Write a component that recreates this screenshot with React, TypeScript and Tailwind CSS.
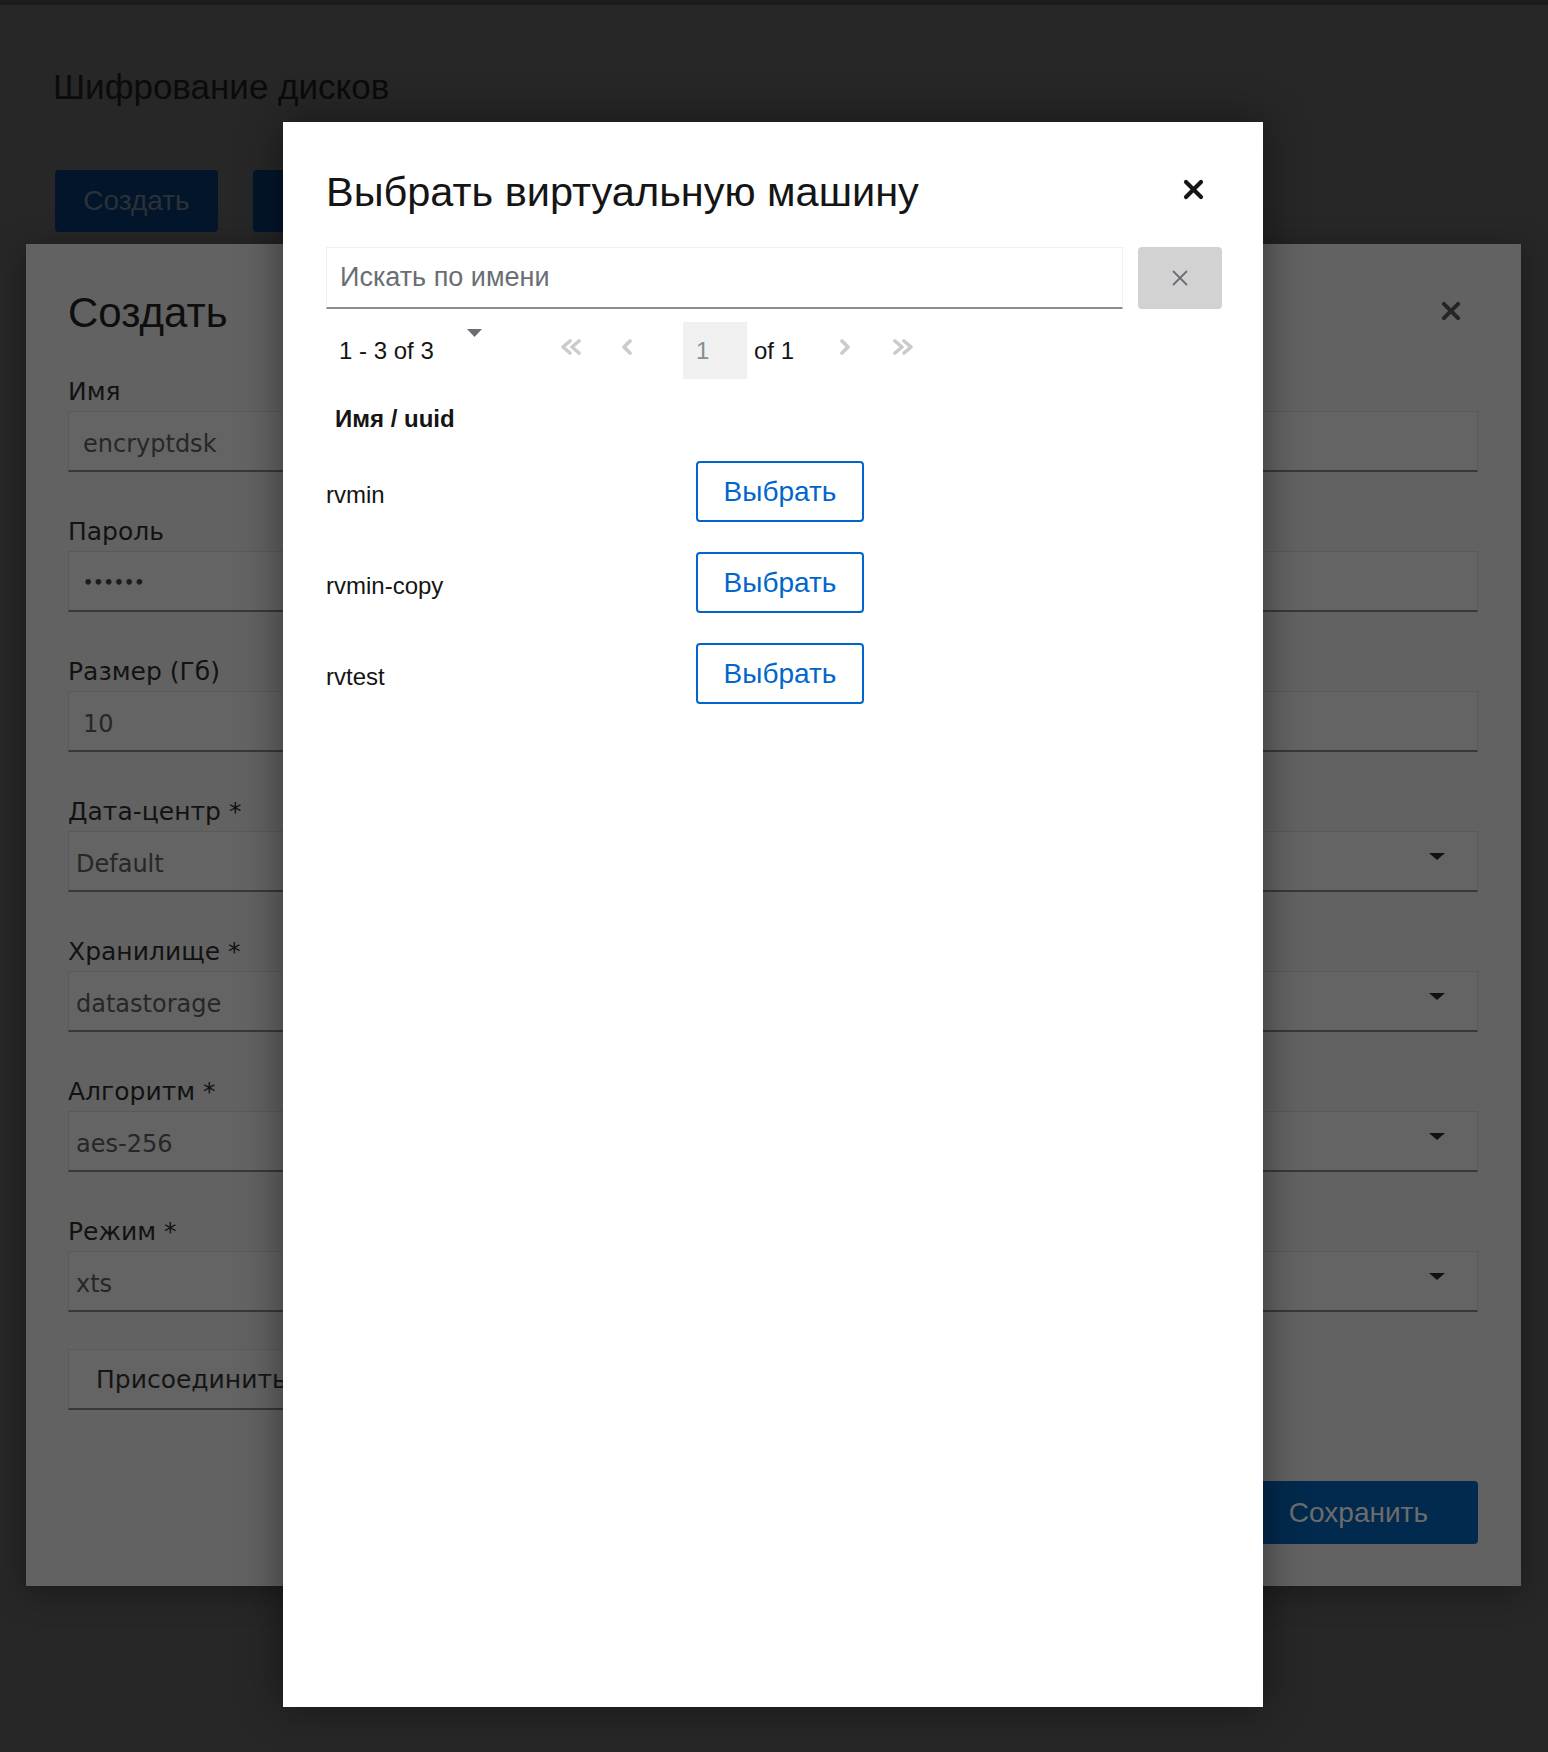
import React from 'react';

type Field = { label: string; value: string; kind: 'input' | 'select' | 'password' };

const FIELDS: Field[] = [
  { label: 'Имя', value: 'encryptdsk', kind: 'input' },
  { label: 'Пароль', value: '••••••', kind: 'password' },
  { label: 'Размер (Гб)', value: '10', kind: 'input' },
  { label: 'Дата-центр *', value: 'Default', kind: 'select' },
  { label: 'Хранилище *', value: 'datastorage', kind: 'select' },
  { label: 'Алгоритм *', value: 'aes-256', kind: 'select' },
  { label: 'Режим *', value: 'xts', kind: 'select' },
];

const VMS = ['rvmin', 'rvmin-copy', 'rvtest'];

function BoldX({ className }: { className?: string }) {
  return (
    <svg viewBox="0 0 21 21" className={className} fill="none">
      <path d="M3 3 L18 18 M18 3 L3 18" stroke="currentColor" strokeWidth="4.2" strokeLinecap="round" />
    </svg>
  );
}

function ThinX() {
  return (
    <svg viewBox="0 0 16 16" className="h-[16px] w-[16px] text-[#6a6e73]" fill="none">
      <path d="M1 1 L15 15 M15 1 L1 15" stroke="currentColor" strokeWidth="1.8" />
    </svg>
  );
}

function Chevron({ dir, double }: { dir: 'left' | 'right'; double?: boolean }) {
  const w = double ? 24 : 14;
  let d = '';
  if (dir === 'left') {
    d = double ? 'M11 2 L4 8 L11 14 M20 2 L13 8 L20 14' : 'M10 2 L4 8 L10 14';
  } else {
    d = double ? 'M4 2 L11 8 L4 14 M13 2 L20 8 L13 14' : 'M4 2 L10 8 L4 14';
  }
  return (
    <svg viewBox={`0 0 ${w} 16`} width={w} height={16} fill="none" className="mb-[8px] shrink-0 text-[#cbcbcb]">
      <path d={d} stroke="currentColor" strokeWidth="3.6" strokeLinecap="round" strokeLinejoin="round" />
    </svg>
  );
}

function PanelField({ field, first }: { field: Field; first: boolean }) {
  return (
    <div className={first ? '' : 'mt-[47px]'}>
      <div className="h-[25px] text-[25px] leading-none text-[#121212]">{field.label}</div>
      <div className="mt-[7px] flex h-[61px] items-center justify-between border border-b-2 border-[#5a5a5a] border-b-[#383838] bg-[#646464]">
        {field.kind === 'password' ? (
          <span className="pl-[14px] pt-[4px] text-[16px] font-bold leading-none text-[#1c1c1c]">{field.value}</span>
        ) : (
          <span
            className={`pt-[6px] text-[24px] leading-none text-[#272727] ${
              field.kind === 'select' ? 'pl-[7px]' : 'pl-[14px]'
            }`}
          >
            {field.value}
          </span>
        )}
        {field.kind === 'select' && (
          <svg viewBox="0 0 16 7" className="mr-[32px] mb-[10px] h-[7px] w-[16px]">
            <path d="M0 0 L16 0 L8 7 Z" fill="#111111" />
          </svg>
        )}
      </div>
    </div>
  );
}

export default function App() {
  return (
    <div className="relative min-h-[1752px] w-full overflow-hidden bg-[#272727] font-['Liberation_Sans',Arial,sans-serif]">
      <div className="h-[5px] bg-[#1c1c1c]" />

      {/* background page, dimmed */}
      <div className="pl-[53px]">
        <h1 className="mt-[64px] h-[34px] text-[35px] font-normal leading-none text-[#0b0b0b]">
          Шифрование дисков
        </h1>
        <div className="mt-[67px] flex gap-[35px] pl-[2px]">
          <div className="flex h-[62px] w-[163px] items-center justify-center rounded-[4px] bg-[#03152a] text-[28px] text-[#2b3138]">
            Создать
          </div>
          <div className="h-[62px] w-[163px] rounded-[4px] bg-[#03152a]" />
        </div>
      </div>

      <div className="ml-[26px] mt-[12px] h-[1342px] w-[1495px] bg-[#626262] pl-[42px] pr-[43px] pt-[48px] shadow-[0_6px_30px_rgba(0,0,0,0.35)]">
        <div className="flex items-center justify-between">
          <h2 className="h-[42px] text-[42px] font-normal leading-none text-[#0e0e0e]">Создать</h2>
          <BoldX className="mr-[17px] mb-[4px] h-[20px] w-[20px] text-[#252525]" />
        </div>
        <div className="mt-[45px] font-['DejaVu_Sans',sans-serif]">
          {FIELDS.map((f, i) => (
            <PanelField key={f.label} field={f} first={i === 0} />
          ))}
          <div className="mt-[37px] flex h-[61px] w-fit items-center border border-b-2 border-[#5a5a5a] border-b-[#383838] bg-[#646464] px-[27px] text-[25px] leading-none text-[#151515]">
            Присоединить
          </div>
        </div>
        <div className="mt-[71px] flex justify-end">
          <div className="flex h-[63px] items-center rounded-[4px] bg-[#022a4e] px-[50px] text-[28px] text-[#6c6c6c]">
            Сохранить
          </div>
        </div>
      </div>

      {/* modal */}
      <div className="absolute left-[283px] top-[122px] h-[1585px] w-[980px] bg-white pl-[43px] pr-[41px] pt-[49px] shadow-[0_0_40px_rgba(0,0,0,0.45)]">
        <button type="button" className="absolute right-[59px] top-[57px] text-[#151515]">
          <BoldX className="h-[21px] w-[21px]" />
        </button>
        <h2 className="h-[42px] text-[41.5px] font-normal leading-none text-[#151515]">
          Выбрать виртуальную машину
        </h2>

        <div className="mt-[34px] flex gap-[15px]">
          <input
            readOnly
            placeholder="Искать по имени"
            className="h-[62px] flex-1 border border-b-2 border-[#f0f0f0] border-b-[#8a8d90] bg-white pl-[13px] text-[27px] text-[#151515] outline-none placeholder:text-[#6a6e73]"
          />
          <button
            type="button"
            className="flex h-[62px] w-[84px] items-center justify-center rounded-[4px] bg-[#d2d2d2]"
          >
            <ThinX />
          </button>
        </div>

        <div className="mt-[13px] flex h-[57px] items-center text-[24px] leading-none text-[#151515]">
          <div className="flex h-full w-[156px] justify-between pl-[13px]">
            <span className="self-center">1 - 3 of 3</span>
            <svg viewBox="0 0 15 8" className="mt-[7px] h-[8px] w-[15px]">
              <path d="M0 0 L15 0 L7.5 8 Z" fill="#6a6e73" />
            </svg>
          </div>
          <div className="ml-[77px]">
            <Chevron dir="left" double />
          </div>
          <div className="ml-[37px]">
            <Chevron dir="left" />
          </div>
          <div className="ml-[49px] flex h-full w-[64px] items-center bg-[#f0f0f0] pl-[13px] text-[#8a8d90]">1</div>
          <span className="ml-[7px] w-[84px]">of 1</span>
          <Chevron dir="right" />
          <div className="ml-[39px]">
            <Chevron dir="right" double />
          </div>
        </div>

        <div className="mt-[28px] h-[24px] pl-[9px] text-[24px] font-bold leading-none text-[#151515]">
          Имя / uuid
        </div>

        <div className="mt-[30px] flex flex-col gap-[30px]">
          {VMS.map((vm) => (
            <div key={vm} className="flex items-center">
              <span className="w-[370px] pt-[7px] text-[24px] leading-none text-[#151515]">{vm}</span>
              <button
                type="button"
                className="h-[61px] w-[168px] rounded-[4px] border-2 border-[#0066cc] bg-white text-[28px] text-[#0066cc]"
              >
                Выбрать
              </button>
            </div>
          ))}
        </div>
      </div>
    </div>
  );
}
